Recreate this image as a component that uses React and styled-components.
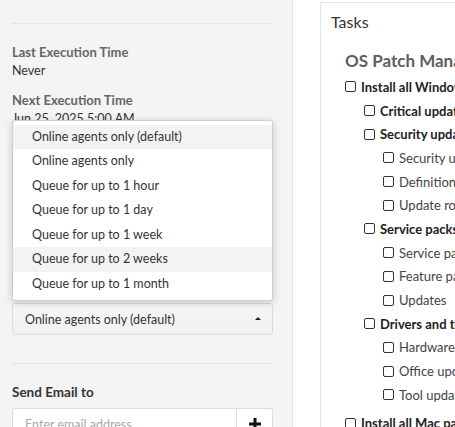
import styled, { createGlobalStyle } from 'styled-components';

const GlobalStyle = createGlobalStyle`
  html, body {
    margin: 0;
    padding: 0;
    overflow: hidden;
    background: #fff;
  }
  body {
    font-family: Lato, "Noto Sans", sans-serif;
    color: #333;
  }
`;

const Page = styled.div`
  display: flex;
  width: 455px;
  height: 427px;
  overflow: hidden;
`;

const SidePanel = styled.div`
  flex: 0 0 261px;
  padding: 0 19px 0 12px;
  background: #f4f4f4;
  border-right: 1px solid #e2e2e2;
`;

const Divider = styled.div`
  border-top: 1px solid #e4e4e4;
  margin: ${p => p.$top || 0}px 0 0 0;
`;

const Field = styled.div`
  display: flex;
  flex-direction: column;
  gap: ${p => p.$gap || 3}px;
  margin-top: ${p => p.$top || 0}px;
`;

const Label = styled.div`
  font-family: "Liberation Sans Narrow", Lato, sans-serif;
  font-size: ${p => p.$size || 13}px;
  font-weight: 700;
  line-height: 16px;
  color: ${p => p.$dark ? '#333' : '#666'};
`;

const Value = styled.div`
  font-size: 12.5px;
  line-height: 16px;
  color: #333;
`;

const SelectWrap = styled.div`
  position: relative;
`;

const Select = styled.div`
  display: flex;
  align-items: center;
  justify-content: space-between;
  height: 30px;
  padding: 0 11px 0 12px;
  background: linear-gradient(#f6f6f6, #f1f1f1);
  border: 1px solid #dcdcdc;
  border-radius: 3px;
  font-size: 12.5px;
  color: #333;
`;

const Caret = styled.span`
  width: 0;
  height: 0;
  border-left: 3px solid transparent;
  border-right: 3px solid transparent;
  border-bottom: 3px solid #222;
  margin-top: -2px;
`;

const Menu = styled.ul`
  position: absolute;
  left: 0;
  right: 0;
  bottom: calc(100% + 2px);
  margin: 0;
  padding: 4px 0;
  list-style: none;
  background: #fff;
  border: 1px solid #cfcfcf;
  border-radius: 3px;
  box-shadow: 0 2px 8px rgba(0, 0, 0, 0.18);
  z-index: 10;
`;

const MenuItem = styled.li`
  height: 24.5px;
  line-height: 24.5px;
  padding-left: 19px;
  font-size: 12.5px;
  color: #333;
  background: ${p => p.$active ? '#f3f3f3' : 'transparent'};
`;

const InputGroup = styled.div`
  display: flex;
  height: 32px;
`;

const EmailInput = styled.div`
  flex: 1;
  display: flex;
  align-items: center;
  padding-left: 12px;
  background: #fff;
  border: 1px solid #dcdcdc;
  border-radius: 3px 0 0 3px;
  font-size: 12.5px;
  color: #aaa;
`;

const AddButton = styled.div`
  flex: 0 0 35px;
  display: flex;
  align-items: center;
  justify-content: center;
  background: #fff;
  border: 1px solid #dcdcdc;
  border-left: none;
  border-radius: 0 3px 3px 0;
`;

const MainArea = styled.div`
  flex: 1;
  padding: 2px 0 0 27px;
  background: #fff;
  min-width: 0;
`;

const Card = styled.div`
  border-top: 1px solid #e6e6e6;
  border-left: 1px solid #e6e6e6;
  padding: 10px 0 0 10px;
  white-space: nowrap;
  height: 100%;
`;

const CardTitle = styled.div`
  font-size: 16px;
  line-height: 18px;
  color: #333;
`;

const GroupTitle = styled.div`
  font-size: 17px;
  font-weight: 700;
  line-height: 20px;
  color: #5e5e5e;
  margin: 20px 0 4px 14px;
`;

const TreeRow = styled.div`
  display: flex;
  align-items: center;
  gap: 5px;
  height: 23.7px;
  padding-left: ${p => 14 + p.$level * 19}px;
  font-size: 13px;
  font-weight: ${p => p.$bold ? 700 : 400};
  color: ${p => p.$bold ? '#222' : '#444'};
  margin-top: ${p => p.$gapTop || 0}px;
`;

const Check = styled.span`
  flex: 0 0 auto;
  width: 9px;
  height: 9px;
  border: 1.2px solid #333;
  border-radius: 2px;
  box-sizing: content-box;
`;

const tasks = [
  { label: 'Install all Windows updates', level: 0, bold: true },
  { label: 'Critical updates', level: 1, bold: true },
  { label: 'Security updates', level: 1, bold: true },
  { label: 'Security updates', level: 2 },
  { label: 'Definition updates', level: 2 },
  { label: 'Update rollups', level: 2 },
  { label: 'Service packs', level: 1, bold: true },
  { label: 'Service packs', level: 2 },
  { label: 'Feature packs', level: 2 },
  { label: 'Updates', level: 2 },
  { label: 'Drivers and tools', level: 1, bold: true },
  { label: 'Hardware drivers', level: 2 },
  { label: 'Office updates', level: 2 },
  { label: 'Tool updates', level: 2 },
  { label: 'Install all Mac patches', level: 0, bold: true, gapTop: 5 },
];

const options = [
  'Online agents only (default)',
  'Online agents only',
  'Queue for up to 1 hour',
  'Queue for up to 1 day',
  'Queue for up to 1 week',
  'Queue for up to 2 weeks',
  'Queue for up to 1 month',
];

const PlusIcon = () => (
  <svg width="12" height="12" viewBox="0 0 12 12">
    <path d="M4.5 0h3v4.5H12v3H7.5V12h-3V7.5H0v-3h4.5z" fill="#111" />
  </svg>
);

export default function App() {
  return (
    <Page>
      <GlobalStyle />
      <SidePanel>
        <Divider $top={23} />
        <Field $top={20}>
          <Label>Last Execution Time</Label>
          <Value>Never</Value>
        </Field>
        <Field $top={13}>
          <Label>Next Execution Time</Label>
          <Value>Jun 25, 2025 5:00 AM</Value>
        </Field>
        <Field $top={14} $gap={6}>
          <Label>Time Zone</Label>
          <Select>UTC<Caret /></Select>
        </Field>
        <Field $top={14} $gap={6}>
          <Label>Retry Count</Label>
          <Select>0<Caret /></Select>
        </Field>
        <Field $top={17} $gap={7}>
          <Label>Offline Agents</Label>
          <SelectWrap>
            <Select>
              Online agents only (default)
              <Caret />
            </Select>
            <Menu>
              {options.map((o, i) => (
                <MenuItem key={o} $active={i === 0 || i === 5}>{o}</MenuItem>
              ))}
            </Menu>
          </SelectWrap>
        </Field>
        <Divider $top={28} />
        <Field $top={20} $gap={8}>
          <Label $dark $size={13.5}>Send Email to</Label>
          <InputGroup>
            <EmailInput>Enter email address</EmailInput>
            <AddButton><PlusIcon /></AddButton>
          </InputGroup>
        </Field>
      </SidePanel>
      <MainArea>
        <Card>
          <CardTitle>Tasks</CardTitle>
          <GroupTitle>OS Patch Management</GroupTitle>
          {tasks.map((t, i) => (
            <TreeRow key={i} $level={t.level} $bold={t.bold} $gapTop={t.gapTop}>
              <Check />
              {t.label}
            </TreeRow>
          ))}
        </Card>
      </MainArea>
    </Page>
  );
}
